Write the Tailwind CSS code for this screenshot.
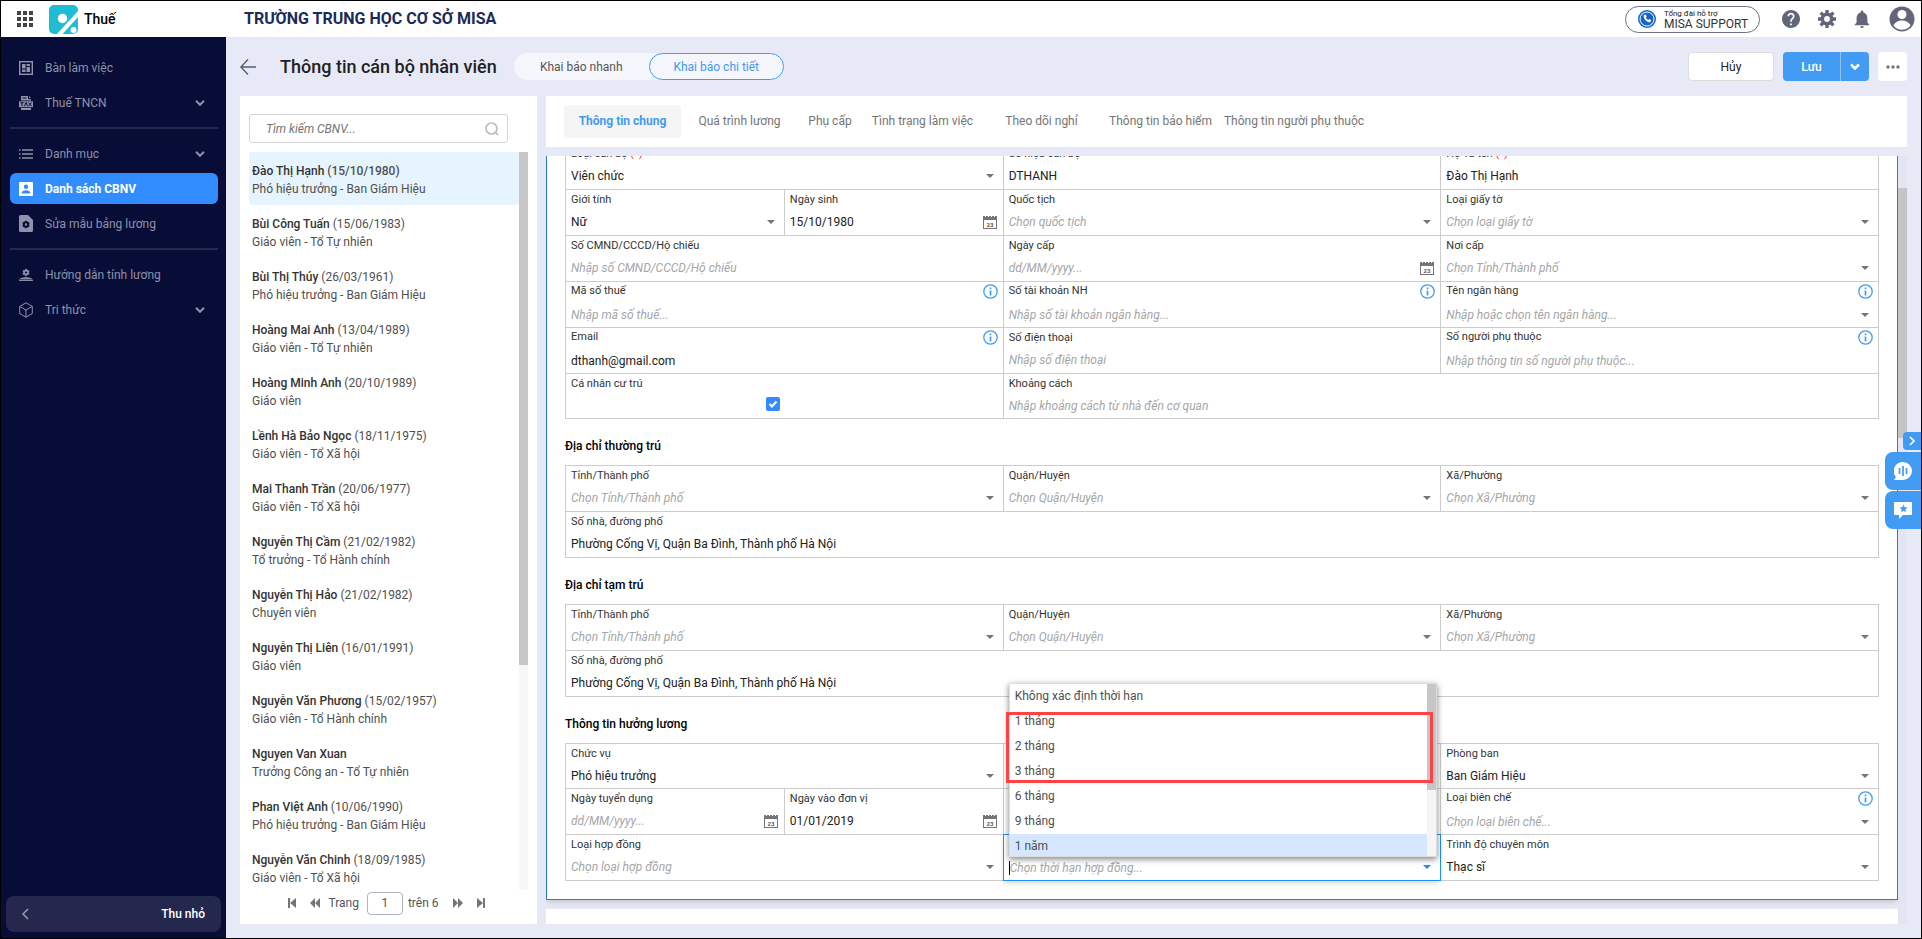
<!DOCTYPE html>
<html lang="vi">
<head>
    <meta charset="UTF-8">
    <meta name="viewport" content="width=device-width, initial-scale=1.0">
    <title>Thông tin cán bộ nhân viên</title>
    <script src="https://cdn.jsdelivr.net/npm/@tailwindcss/browser@4"></script>
</head>
<body class="h-screen flex flex-col overflow-hidden border border-black bg-[#e7eaf6] font-['Roboto','Noto_Sans',sans-serif] text-xs text-[#212121]">

    <!-- Top bar -->
    <header class="h-9 shrink-0 flex items-center bg-white pl-4 pr-1.5">
        <button class="w-4 h-4" aria-label="Ứng dụng">
            <svg viewBox="0 0 16 16" class="w-4 h-4 fill-[#444]"><path d="M0 0h4v4H0zM6 0h4v4H6zM12 0h4v4h-4zM0 6h4v4H0zM6 6h4v4H6zM12 6h4v4h-4zM0 12h4v4H0zM6 12h4v4H6zM12 12h4v4h-4z"/></svg>
        </button>
        <svg viewBox="0 0 29 29" class="w-[29px] h-[29px] ml-4">
            <rect width="29" height="29" rx="5" fill="#1fbcd4"/>
            <path d="M8 29L29 6v6L13.500 29z" fill="#fff"/>
            <circle cx="13.500" cy="13.500" r="4.700" fill="#fff"/>
            <circle cx="24.500" cy="25" r="3" fill="#fff"/>
        </svg>
        <span class="ml-1.5 w-40 text-sm font-medium text-black">Thuế</span>
        <h1 class="text-base font-bold text-[#1c2b57]">TRƯỜNG TRUNG HỌC CƠ SỞ MISA</h1>
        <button class="ml-auto flex items-center gap-2 w-[135px] h-[27px] pl-3 rounded-full border border-[#6b6f87] text-left">
            <svg viewBox="0 0 18 18" class="w-[18px] h-[18px]">
                <circle cx="9" cy="9" r="9" fill="#1565c9"/>
                <circle cx="9" cy="9" r="7" fill="none" stroke="#fff"/>
                <path d="M6.300 5l1.400-.4 1 2-.9.9c.5 1.100 1.300 1.900 2.400 2.400l.9-.9 2 1-.4 1.500c-.3.700-1 .9-1.700.7C8.300 11.500 6.400 9.500 5.700 6.700c-.1-.7 0-1.400.6-1.700z" fill="#fff"/>
            </svg>
            <span>
                <span class="block text-[8px] leading-[9px]">Tổng đài hỗ trợ</span>
                <span class="block text-xs leading-3 text-[#333]">MISA SUPPORT</span>
            </span>
        </button>
        <div class="flex items-center ml-[22px] text-[#636678]">
            <button class="w-[18px]" aria-label="Trợ giúp">
                <svg viewBox="2 2 20 20" class="w-[18px] h-[18px] fill-current"><path d="M12 2C6.480 2 2 6.480 2 12s4.480 10 10 10 10-4.480 10-10S17.520 2 12 2zm1 17h-2v-2h2v2zm2.070-7.750l-.9.920C13.450 12.900 13 13.500 13 15h-2v-.5c0-1.100.45-2.100 1.170-2.830l1.240-1.260c.37-.36.590-.86.590-1.410 0-1.100-.9-2-2-2s-2 .9-2 2H8c0-2.210 1.790-4 4-4s4 1.790 4 4c0 .88-.36 1.680-.93 2.250z"/></svg>
            </button>
            <button class="w-[18px] ml-[18px]" aria-label="Thiết lập">
                <svg viewBox="0 0 18 18" class="w-[18px] h-[18px] fill-none stroke-current"><circle cx="9" cy="9" r="4.700" stroke-width="3.600"/><path d="M9 0v4M9 14v4M0 9h4M14 9h4M2.600 2.600l2.800 2.800M12.600 12.600l2.800 2.800M2.600 15.400l2.800-2.800M12.600 5.400l2.800-2.800" stroke-width="3.400"/></svg>
            </button>
            <button class="w-4 ml-[18px]" aria-label="Thông báo">
                <svg viewBox="4 2 16 20" class="w-4 h-[18px] fill-current"><path d="M12 22c1.100 0 2-.9 2-2h-4c0 1.100.9 2 2 2zm6-6v-5c0-3.070-1.640-5.640-4.500-6.320V4c0-.83-.67-1.500-1.500-1.500s-1.500.67-1.500 1.500v.68C7.630 5.360 6 7.920 6 11v5l-2 2v1h16v-1l-2-2z"/></svg>
            </button>
            <button class="w-[26px] ml-[19px]" aria-label="Tài khoản">
                <svg viewBox="0 0 26 26" class="w-[26px] h-[26px]"><circle cx="13" cy="13" r="12.500" fill="#636678"/><circle cx="13" cy="8.500" r="4.500" fill="#fff"/><path d="M4.500 19.500c1.500-3.500 5-5 8.500-5s7 1.500 8.500 5a10.500 10.500 0 01-17 0z" fill="#fff"/></svg>
            </button>
        </div>
    </header>

    <div class="flex-1 min-h-0 flex">
        <!-- Sidebar -->
        <nav class="w-[225px] shrink-0 flex flex-col bg-[#070d37] text-[#8f92a8] pt-[15px]">
            <ul class="flex flex-col gap-1 pr-2 pl-[9px]">
                <li>
                    <a href="#" class="flex items-center h-[31px] pl-[9px] gap-3">
                        <svg viewBox="0 0 14 14" class="w-3.5 h-3.5 fill-none stroke-current"><rect x=".7" y=".7" width="12.600" height="12.600" stroke-width="1.400"/><path d="M3 3h3.500v4.500H3zM7.500 3H11v2H7.500zM3 8.500h3.500V11H3zM7.500 6H11v5H7.500z" fill="currentColor" stroke="none"/></svg>
                        Bàn làm việc
                    </a>
                </li>
                <li>
                    <a href="#" class="flex items-center h-[31px] pl-[9px] pr-[13px] gap-3">
                        <svg viewBox="0 0 14 14" class="w-3.5 h-3.5 fill-current"><path d="M2 0h7v3h3v1.500H2zM10 0l2 2h-2zM0 5.300h14v6H0zM2 12h10v2H2z"/><path d="M1.500 6.700h3M3 6.700v3.500M5.500 10.200l1.200-3.500h.6l1.200 3.500M9.500 6.500l3 3.700M12.500 6.500l-3 3.700M3.500 2h4" class="stroke-[#070d37]" fill="none"/></svg>
                        Thuế TNCN
                        <svg viewBox="0 0 10 6" class="ml-auto w-2.5 h-1.5 fill-none stroke-current stroke-2"><path d="M1 .8l4 4 4-4"/></svg>
                    </a>
                </li>
                <li class="h-0.5 my-[5px] bg-[#23284c]" aria-hidden="true"></li>
                <li>
                    <a href="#" class="flex items-center h-[31px] pl-[9px] pr-[13px] gap-3">
                        <svg viewBox="0 0 14 14" class="w-3.5 h-3.5 stroke-current"><path d="M0 3h1.500M3 3h11M0 7h1.500M3 7h11M0 11h1.500M3 11h11" stroke-width="1.300"/></svg>
                        Danh mục
                        <svg viewBox="0 0 10 6" class="ml-auto w-2.5 h-1.5 fill-none stroke-current stroke-2"><path d="M1 .8l4 4 4-4"/></svg>
                    </a>
                </li>
                <li>
                    <a href="#" class="flex items-center h-[31px] pl-[9px] gap-3 rounded-md bg-[#318cff] text-white font-bold">
                        <svg viewBox="0 0 14 14" class="w-3.5 h-3.5"><rect width="14" height="14" rx="1" fill="#fff"/><circle cx="7" cy="4.800" r="2.200" fill="#318cff"/><path d="M2.500 11.500C2.500 9.500 5 8.300 7 8.300s4.500 1.200 4.500 3.200z" fill="#318cff"/></svg>
                        Danh sách CBNV
                    </a>
                </li>
                <li>
                    <a href="#" class="flex items-center h-[31px] pl-[9px] gap-3">
                        <svg viewBox="0 0 14 17" class="w-3.5 h-[17px]"><path d="M1.500 0H9l5 5v10.500a1.500 1.500 0 01-1.500 1.500h-11A1.500 1.500 0 010 15.500v-14A1.500 1.500 0 011.500 0z" fill="currentColor"/><circle cx="7" cy="9.500" r="2.200" class="fill-none stroke-[#070d37] stroke-2"/><path d="M7 5.700v1.500M7 11.800v1.500M3.700 7.600l1.300.8M9 10.600l1.300.8M3.700 11.400l1.300-.8M9 8.400l1.300-.8" class="stroke-[#070d37]" stroke-width="1.500"/></svg>
                        Sửa mẫu bảng lương
                    </a>
                </li>
                <li class="h-0.5 my-[5px] bg-[#23284c]" aria-hidden="true"></li>
                <li>
                    <a href="#" class="flex items-center h-[31px] pl-[9px] gap-3">
                        <svg viewBox="0 0 14 14" class="w-3.5 h-3.5 fill-none stroke-current"><circle cx="7" cy="4.500" r="2" stroke-width="1.800"/><path d="M7 .8v1.500M7 6.700v1.500M3.800 2.600l1.300.8M8.900 5.600l1.300.8M3.800 6.400l1.300-.8M8.900 3.400l1.300-.8" stroke-width="1.300"/><path d="M1.500 10.700c2.500-1.200 8.500-1.200 11 0z" fill="currentColor"/><path d="M0 12.300h14" stroke-width="1.300"/></svg>
                        Hướng dẫn tính lương
                    </a>
                </li>
                <li>
                    <a href="#" class="flex items-center h-[31px] pl-[9px] pr-[13px] gap-3">
                        <svg viewBox="0 0 14 16" class="w-3.5 h-4 fill-none stroke-current stroke-1"><path d="M7 .8l6.300 3.600v7.200L7 15.200.7 11.600V4.400zM.7 4.400L7 8l6.300-3.600M7 8v7.200"/></svg>
                        Tri thức
                        <svg viewBox="0 0 10 6" class="ml-auto w-2.5 h-1.5 fill-none stroke-current stroke-2"><path d="M1 .8l4 4 4-4"/></svg>
                    </a>
                </li>
            </ul>
            <button class="mt-auto mb-1.5 mx-[5px] h-9 flex items-center justify-between rounded-lg bg-[#23284c] px-4 text-white font-medium">
                <svg viewBox="0 0 7 12" class="w-[7px] h-3 fill-none stroke-[#9a9db0] stroke-[1.5]"><path d="M6 1L1 6l5 5"/></svg>
                Thu nhỏ
            </button>
        </nav>

        <main class="flex-1 min-w-0 flex flex-col px-3.5 pb-3.5">
            <!-- Page heading and actions -->
            <div class="h-[59px] shrink-0 flex items-center">
                <a href="#" aria-label="Quay lại">
                    <svg viewBox="0 0 16 16" class="w-4 h-4 fill-none stroke-[#555a6b] stroke-[1.3]"><path d="M8 .5L.8 8 8 15.500M.8 8H16"/></svg>
                </a>
                <h2 class="ml-6 text-lg font-medium">Thông tin cán bộ nhân viên</h2>
                <div class="ml-[17px] flex h-[27px] rounded-full bg-[#f5f6fc]">
                    <button class="w-[135px] text-[#555]">Khai báo nhanh</button>
                    <button class="w-[135px] rounded-full border border-[#429bf3] text-[#429bf3]">Khai báo chi tiết</button>
                </div>
                <div class="ml-auto flex gap-[9px] h-[29px]">
                    <button class="w-[86px] rounded border border-[#ddd] bg-white">Hủy</button>
                    <div class="flex rounded bg-[#429bf3] text-white">
                        <button class="w-[58px] border-r border-[#8cc3f8] font-medium">Lưu</button>
                        <button class="w-7 flex items-center justify-center" aria-label="Tùy chọn lưu">
                            <svg viewBox="0 0 10 8" class="w-2.5 h-2 fill-none stroke-white stroke-[2.5]"><path d="M1 1.500l4 4 4-4"/></svg>
                        </button>
                    </div>
                    <button class="w-[29px] flex items-center justify-center rounded bg-white" aria-label="Thêm">
                        <svg viewBox="0 0 14 4" class="w-3.5 h-1 fill-[#757575]"><circle cx="2" cy="2" r="1.700"/><circle cx="7" cy="2" r="1.700"/><circle cx="12" cy="2" r="1.700"/></svg>
                    </button>
                </div>
            </div>

            <div class="flex-1 min-h-0 flex gap-[9px]">
                <!-- Employee list -->
                <section class="w-[297px] shrink-0 flex flex-col bg-white px-[9px] pt-[18px]">
                    <div class="w-[259px] h-[29px] shrink-0 flex items-center rounded-[3px] border border-[#d5d5d5] pl-4 pr-2">
                        <input type="text" placeholder="Tìm kiếm CBNV..." aria-label="Tìm kiếm CBNV" class="flex-1 min-w-0 outline-none italic placeholder:text-[#757575]">
                        <svg viewBox="0 0 14 14" class="w-3.5 h-3.5 fill-none stroke-[#bdbdbd] stroke-[1.7]"><circle cx="6.500" cy="6.500" r="5.500"/><path d="M10 10l3 3"/></svg>
                    </div>
                    <div class="flex-1 min-h-0 mt-[9px] flex">
                        <ul id="employees" class="flex-1 overflow-hidden"></ul>
                        <div class="w-[9px] bg-[#f7f7f7]"><div class="h-[513px] bg-[#c6c6c6]"></div></div>
                    </div>
                    <div class="h-[34px] shrink-0 flex items-start justify-center pr-1">
                        <div class="flex items-center h-[26px] text-[#555]">
                            <button aria-label="Trang đầu"><svg viewBox="0 0 8 10" class="w-2 h-2.5 fill-[#757575]"><path d="M0 0h2v10H0zM8 0v10L2 5z"/></svg></button>
                            <button class="ml-3.5" aria-label="Trang trước"><svg viewBox="0 0 10 10" class="w-2.5 h-2.5 fill-[#757575]"><path d="M5 0v10L0 5zM10 0v10L5 5z"/></svg></button>
                            <label for="page" class="ml-2">Trang</label>
                            <input id="page" type="text" value="1" class="ml-2 mr-[5px] w-9 h-[23px] rounded-sm border border-[#afb1c4] text-center">
                            <span>trên 6</span>
                            <button class="ml-3.5" aria-label="Trang sau"><svg viewBox="0 0 10 10" class="w-2.5 h-2.5 fill-[#757575]"><path d="M0 0l5 5-5 5zM5 0l5 5-5 5z"/></svg></button>
                            <button class="ml-3.5" aria-label="Trang cuối"><svg viewBox="0 0 8 10" class="w-2 h-2.5 fill-[#757575]"><path d="M6 0h2v10H6zM0 0l6 5-6 5z"/></svg></button>
                        </div>
                    </div>
                </section>

                <section class="flex-1 min-w-0 flex flex-col gap-[9px]">
                    <!-- Tabs -->
                    <div class="h-[51px] shrink-0 flex items-center bg-white pl-[18px] text-[#757575]">
                        <button class="w-[117px] h-[33px] pb-0.5 rounded bg-[#f5f5f5] text-[#429bf3] font-bold">Thông tin chung</button>
                        <button class="w-[117px] h-[33px] pb-0.5">Quá trình lương</button>
                        <button class="w-16 h-[33px] pb-0.5">Phụ cấp</button>
                        <button class="w-[121px] h-[33px] pb-0.5">Tình trạng làm việc</button>
                        <button class="w-[117px] h-[33px] pb-0.5">Theo dõi nghỉ</button>
                        <button class="w-[121px] h-[33px] pb-0.5">Thông tin bảo hiểm</button>
                        <button class="w-[146px] h-[33px] pb-0.5">Thông tin người phụ thuộc</button>
                    </div>

                    <!-- Form, scrolled down a little -->
                    <div class="flex-1 min-h-0 flex overflow-hidden">
                        <div class="flex-1 min-w-0 flex flex-col overflow-hidden">
                            <form id="form" class="-mt-[13px] shrink-0 border-x border-b border-[#2b7cd9] bg-white px-[18px] pb-[18px] shadow-md"></form>
                            <div class="mt-[9px] flex-1 bg-white"></div>
                        </div>
                        <div class="w-[9px] pt-8 bg-[#e4e5f2]"><div class="h-[250px] bg-[#c4c4c6]"></div></div>
                    </div>
                </section>
            </div>
        </main>
    </div>

    <!-- Floating help buttons -->
    <div class="fixed right-px top-[432px] flex flex-col items-end">
        <button class="w-[18px] h-[18px] flex items-center justify-center rounded-l-sm bg-[#429bf3]" aria-label="Ẩn">
            <svg viewBox="0 0 6 10" class="w-1.5 h-2.5 fill-none stroke-white stroke-[1.7]"><path d="M1 1l4 4-4 4"/></svg>
        </button>
        <button class="mt-0.5 w-9 h-[38px] flex items-center justify-center rounded-l-lg bg-[#429bf3]" aria-label="Trợ lý">
            <svg viewBox="0 0 18 18" class="w-[18px] h-[18px]"><path d="M9 0a9 9 0 110 18H0l2-3A9 9 0 019 0z" fill="#fff"/><path d="M5.500 6v6M9 4v10M12.500 6v6" stroke="#429bf3" stroke-width="1.700"/></svg>
        </button>
        <button class="mt-px w-9 h-[38px] flex items-center justify-center rounded-l-lg bg-[#429bf3]" aria-label="Góp ý">
            <svg viewBox="0 0 18 18" class="w-[18px] h-[18px]"><path d="M1 1h16a1 1 0 011 1v11a1 1 0 01-1 1H9l-4 4v-4H1a1 1 0 01-1-1V2a1 1 0 011-1z" fill="#fff"/><path d="M9.500 3.500l1.100 2.800 3 .2-2.300 1.900.8 2.900-2.600-1.600-2.600 1.600.8-2.900-2.300-1.900 3-.2z" fill="#429bf3"/></svg>
        </button>
    </div>

<script>
    const employees = [
        ['Đào Thị Hạnh', '(15/10/1980)', 'Phó hiệu trưởng - Ban Giám Hiệu'],
        ['Bùi Công Tuấn', '(15/06/1983)', 'Giáo viên - Tổ Tự nhiên'],
        ['Bùi Thị Thúy', '(26/03/1961)', 'Phó hiệu trưởng - Ban Giám Hiệu'],
        ['Hoàng Mai Anh', '(13/04/1989)', 'Giáo viên - Tổ Tự nhiên'],
        ['Hoàng Minh Anh', '(20/10/1989)', 'Giáo viên'],
        ['Lềnh Hà Bảo Ngọc', '(18/11/1975)', 'Giáo viên - Tổ Xã hội'],
        ['Mai Thanh Trần', '(20/06/1977)', 'Giáo viên - Tổ Xã hội'],
        ['Nguyễn Thị Cầm', '(21/02/1982)', 'Tổ trưởng - Tổ Hành chính'],
        ['Nguyễn Thị Hảo', '(21/02/1982)', 'Chuyên viên'],
        ['Nguyễn Thị Liên', '(16/01/1991)', 'Giáo viên'],
        ['Nguyễn Văn Phương', '(15/02/1957)', 'Giáo viên - Tổ Hành chính'],
        ['Nguyen Van Xuan', '', 'Trưởng Công an - Tổ Tự nhiên'],
        ['Phan Việt Anh', '(10/06/1990)', 'Phó hiệu trưởng - Ban Giám Hiệu'],
        ['Nguyễn Văn Chinh', '(18/09/1985)', 'Giáo viên - Tổ Xã hội'],
    ];

    document.getElementById('employees').innerHTML = employees.map(([name, birthday, job], i) => `
        <li class="h-[53px] pt-2.5 pl-[3px] leading-[18px] text-[#4f4f4f] ${i === 0 ? 'rounded-[3px] bg-[#e6f4ff]' : ''}">
            <p class="${i === 0 ? 'font-medium' : ''}"><span class="font-medium text-[#333]">${name}</span> ${birthday}</p>
            <p>${job}</p>
        </li>`).join('');

    // type: text, select, date, check, combo (open list) or blank
    const sections = [
        { fields: [
            { label: 'Loại cán bộ', required: true, type: 'select', value: 'Viên chức' },
            { label: 'Số hiệu cán bộ', type: 'text', value: 'DTHANH' },
            { label: 'Họ và tên', required: true, type: 'text', value: 'Đào Thị Hạnh' },
            { label: 'Giới tính', type: 'select', value: 'Nữ', span: 'col-span-1' },
            { label: 'Ngày sinh', type: 'date', value: '15/10/1980', span: 'col-span-1' },
            { label: 'Quốc tịch', type: 'select', hint: 'Chọn quốc tịch' },
            { label: 'Loại giấy tờ', type: 'select', hint: 'Chọn loại giấy tờ' },
            { label: 'Số CMND/CCCD/Hộ chiếu', type: 'text', hint: 'Nhập số CMND/CCCD/Hộ chiếu' },
            { label: 'Ngày cấp', type: 'date', hint: 'dd/MM/yyyy...' },
            { label: 'Nơi cấp', type: 'select', hint: 'Chọn Tỉnh/Thành phố' },
            { label: 'Mã số thuế', info: true, type: 'text', hint: 'Nhập mã số thuế...' },
            { label: 'Số tài khoản NH', info: true, type: 'text', hint: 'Nhập số tài khoản ngân hàng...' },
            { label: 'Tên ngân hàng', info: true, type: 'select', hint: 'Nhập hoặc chọn tên ngân hàng...' },
            { label: 'Email', info: true, type: 'text', value: 'dthanh@gmail.com' },
            { label: 'Số điện thoại', type: 'text', hint: 'Nhập số điện thoại' },
            { label: 'Số người phụ thuộc', info: true, type: 'text', hint: 'Nhập thông tin số người phụ thuộc...' },
            { label: 'Cá nhân cư trú', type: 'check', height: 'h-[45px]' },
            { label: 'Khoảng cách', type: 'text', hint: 'Nhập khoảng cách từ nhà đến cơ quan', span: 'col-span-4', height: 'h-[45px]' },
        ] },
        { title: 'Địa chỉ thường trú', fields: [
            { label: 'Tỉnh/Thành phố', type: 'select', hint: 'Chọn Tỉnh/Thành phố' },
            { label: 'Quận/Huyện', type: 'select', hint: 'Chọn Quận/Huyện' },
            { label: 'Xã/Phường', type: 'select', hint: 'Chọn Xã/Phường' },
            { label: 'Số nhà, đường phố', type: 'text', value: 'Phường Cống Vị, Quận Ba Đình, Thành phố Hà Nội', span: 'col-span-6' },
        ] },
        { title: 'Địa chỉ tạm trú', fields: [
            { label: 'Tỉnh/Thành phố', type: 'select', hint: 'Chọn Tỉnh/Thành phố' },
            { label: 'Quận/Huyện', type: 'select', hint: 'Chọn Quận/Huyện' },
            { label: 'Xã/Phường', type: 'select', hint: 'Chọn Xã/Phường' },
            { label: 'Số nhà, đường phố', type: 'text', value: 'Phường Cống Vị, Quận Ba Đình, Thành phố Hà Nội', span: 'col-span-6' },
        ] },
        { title: 'Thông tin hưởng lương', fields: [
            { label: 'Chức vụ', type: 'select', value: 'Phó hiệu trưởng', height: 'h-[45px]' },
            { type: 'blank', height: 'h-[45px]' },
            { label: 'Phòng ban', type: 'select', value: 'Ban Giám Hiệu', height: 'h-[45px]' },
            { label: 'Ngày tuyển dụng', type: 'date', hint: 'dd/MM/yyyy...', span: 'col-span-1' },
            { label: 'Ngày vào đơn vị', type: 'date', value: '01/01/2019', span: 'col-span-1' },
            { type: 'blank' },
            { label: 'Loại biên chế', info: true, type: 'select', hint: 'Chọn loại biên chế...' },
            { label: 'Loại hợp đồng', type: 'select', hint: 'Chọn loại hợp đồng' },
            { type: 'combo', hint: 'Chọn thời hạn hợp đồng...' },
            { label: 'Trình độ chuyên môn', type: 'select', value: 'Thạc sĩ' },
        ] },
    ];

    const terms = ['Không xác định thời hạn', '1 tháng', '2 tháng', '3 tháng', '6 tháng', '9 tháng', '1 năm'];

    const arrow = `<svg viewBox="0 0 8 4" class="w-2 h-1 mr-[9px] shrink-0 fill-current pointer-events-none"><path d="M0 0h8L4 4z"/></svg>`;
    const calendar = `<svg viewBox="0 0 14 14" class="w-3.5 h-3.5 mr-1.5 shrink-0"><path d="M0 1h14v13H0z" fill="#757575"/><path d="M1 5h12v8H1z" fill="#fff"/><path d="M2.500 0v2M5.500 0v2M8.500 0v2M11.500 0v2" stroke="#fff"/><text x="7" y="11.500" font-size="6" font-weight="700" text-anchor="middle" fill="#555">23</text></svg>`;
    const info = `<svg viewBox="0 0 15 15" class="w-[15px] h-[15px] absolute right-[5px] top-0.5 fill-none stroke-[#429bf3]"><circle cx="7.500" cy="7.500" r="6.700" stroke-width="1.300"/><path d="M7.500 6.500v5M7.500 3.500v1.700" stroke-width="1.700"/></svg>`;

    let nextId = 0;

    function control(f, id) {
        if (f.type === 'check') {
            return `<div class="mt-1.5 pr-7 flex justify-center">
                <span class="relative w-3.5 h-3.5">
                    <input id="${id}" type="checkbox" checked class="appearance-none block w-3.5 h-3.5 rounded-xs bg-[#318cff]">
                    <svg viewBox="0 0 14 14" class="absolute inset-0 fill-none stroke-white stroke-2 pointer-events-none"><path d="M3.500 7l2.500 2.500 4.500-5"/></svg>
                </span>
            </div>`;
        }
        const gap = f.info ? 'mt-2' : 'mt-1.5';
        if (f.type === 'select') {
            return `<div class="${gap} flex items-center text-[#757575]">
                <select id="${id}" class="flex-1 min-w-0 h-[18px] appearance-none outline-none ${f.value ? 'text-[#212121]' : 'italic text-[#a6a6a6]'}"><option>${f.value || f.hint}</option></select>
                ${arrow}
            </div>`;
        }
        return `<div class="${gap} flex items-center">
            <input id="${id}" type="text" value="${f.value || ''}" placeholder="${f.hint || ''}" class="flex-1 min-w-0 h-[18px] outline-none placeholder:italic placeholder:text-[#a6a6a6]">
            ${f.type === 'date' ? calendar : ''}
        </div>`;
    }

    // Contract term field with its list open above it
    function combo(f) {
        return `<div class="relative col-span-2 h-[46px]">
            <div class="absolute -top-px -left-px right-0 bottom-0 flex items-end border border-[#1e8fff] bg-white pl-[5px] pb-[3px] shadow-md text-[#1e8fff]">
                <span class="w-px h-3.5 mb-0.5 bg-black"></span>
                <input type="text" placeholder="${f.hint}" aria-label="${f.hint}" role="combobox" aria-expanded="true" aria-controls="terms" class="flex-1 min-w-0 h-[18px] outline-none placeholder:italic placeholder:text-[#a6a6a6]">
                <svg viewBox="0 0 8 4" class="w-2 h-1 mr-[9px] mb-2 shrink-0 fill-current"><path d="M0 0h8L4 4z"/></svg>
            </div>
            <div class="absolute left-[5px] right-1 bottom-6 h-[174px] flex border border-[#ddd] bg-white shadow-[0_2px_6px_rgba(0,0,0,0.5)] z-10">
                <ul id="terms" role="listbox" class="flex-1 overflow-hidden leading-[25px] text-[#4f4f4f]">
                    ${terms.map((t, i) => `<li role="option" class="h-[25px] pl-[5px] ${i === 6 ? 'bg-[#d5e7ff]' : ''}">${t}</li>`).join('')}
                </ul>
                <div class="w-[9px] bg-[#f5f5f5]"><div class="h-[106px] bg-[#c6c6c6]"></div></div>
                <div class="absolute -left-1 right-[3px] top-7 h-[71px] border-3 border-[#ff4343]"></div>
            </div>
        </div>`;
    }

    function cell(f) {
        if (f.type === 'combo') return combo(f);
        const id = 'field' + (++nextId);
        const box = `relative ${f.span || 'col-span-2'} ${f.height || 'h-[46px]'} border-r border-b border-[#ccc] pl-[5px]`;
        if (f.type === 'blank') return `<div class="${box}"></div>`;
        return `<div class="${box} ${f.info ? 'pt-0.5' : 'pt-[3px]'}">
            <label for="${id}" class="block text-[11px] leading-[14px] text-[#333]">${f.label}${f.required ? ' <span class="text-red-500">(*)</span>' : ''}</label>
            ${f.info ? info : ''}
            ${control(f, id)}
        </div>`;
    }

    document.getElementById('form').innerHTML = sections.map(s => `
        ${s.title ? `<h3 class="h-[46px] pt-[18px] leading-[18px] font-medium text-black">${s.title}</h3>` : ''}
        <div class="grid grid-cols-6 border-t border-l border-[#ccc]">${s.fields.map(cell).join('')}</div>`).join('');
</script>
</body>
</html>
